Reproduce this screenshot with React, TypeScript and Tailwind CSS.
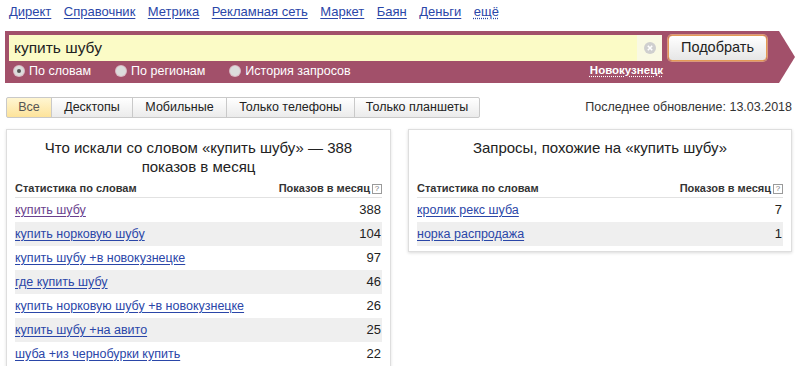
import React from "react";

const navLinks = ["Директ", "Справочник", "Метрика", "Рекламная сеть", "Маркет", "Баян", "Деньги"];

const leftRows: [string, string][] = [
  ["купить шубу", "388"],
  ["купить норковую шубу", "104"],
  ["купить шубу +в новокузнецке", "97"],
  ["где купить шубу", "46"],
  ["купить норковую шубу +в новокузнецке", "26"],
  ["купить шубу +на авито", "25"],
  ["шуба +из чернобурки купить", "22"],
];

const rightRows: [string, string][] = [
  ["кролик рекс шуба", "7"],
  ["норка распродажа", "1"],
];

function Help() {
  return (
    <span className="ml-[2px] inline-flex h-[10px] w-[10px] items-center justify-center border border-[#9a9a9a] text-[8px] leading-none font-normal text-[#777]">
      ?
    </span>
  );
}

function Table({ rows, visitedFirst }: { rows: [string, string][]; visitedFirst?: boolean }) {
  return (
    <div>
      <div className="flex h-[18px] items-center justify-between border-b border-[#e2e2e2] text-[11px] font-bold text-[#333]">
        <span>Статистика по словам</span>
        <span className="flex items-center">
          Показов в месяц
          <Help />
        </span>
      </div>
      {rows.map(([q, n], i) => (
        <div
          key={q}
          className={`flex h-[24px] items-center justify-between text-[12.5px] ${i % 2 === 1 ? "bg-[#efefef]" : "bg-white"}`}
        >
          <span className={`underline underline-offset-2 ${visitedFirst && i === 0 ? "text-[#6a3f8e]" : "text-[#2a46a8]"}`}>{q}</span>
          <span className="pr-[1px] text-[13px] text-[#222]">{n}</span>
        </div>
      ))}
    </div>
  );
}

function Radio({ checked, label }: { checked?: boolean; label: string }) {
  return (
    <span className="flex items-center gap-[5px]">
      <span className="flex h-[10px] w-[10px] items-center justify-center rounded-full bg-[#dcdcdc] shadow-[0_0_0_1px_rgba(255,255,255,0.6)]">
        {checked && <span className="h-[4px] w-[4px] rounded-full bg-[#555]" />}
      </span>
      <span>{label}</span>
    </span>
  );
}

const tabs: [string, string][] = [
  ["Все", "w-[46px]"],
  ["Десктопы", "w-[82px]"],
  ["Мобильные", "w-[95px]"],
  ["Только телефоны", "w-[129px]"],
  ["Только планшеты", "w-[126px]"],
];

export default function App() {
  return (
    <div className="h-[366px] w-[800px] overflow-hidden bg-white font-['Liberation_Sans',Arial,sans-serif] text-[#222]">
      {/* top nav */}
      <div className="flex h-[22px] items-center gap-[12.5px] pl-[9px] pt-[1px] text-[13px]">
        {navLinks.map((l) => (
          <span key={l} className="text-[#2a46a8] underline underline-offset-2">
            {l}
          </span>
        ))}
        <span className="text-[#2a46a8] underline decoration-dotted underline-offset-2">ещё</span>
      </div>

      {/* purple search bar */}
      <div className="ml-[5px] mt-[9px] h-[52px] w-[790px] bg-[#a2506a] [clip-path:polygon(0_0,calc(100%-16px)_0,100%_50%,calc(100%-16px)_100%,0_100%)]">
        <div className="flex items-start pt-[4px]">
          <div className="ml-[4px] flex h-[26px] w-[653px] items-center bg-[#fbfbc6]">
            <span className="flex-1 pl-[5px] text-[15.5px] text-[#222]">купить шубу</span>
            <span className="flex h-full w-[25px] items-center justify-center bg-[#f9f9e3]">
              <svg width="12" height="12" viewBox="0 0 12 12">
                <circle cx="6" cy="6" r="6" fill="#cfcfcf" />
                <path d="M3.8 3.8 L8.2 8.2 M8.2 3.8 L3.8 8.2" stroke="#fff" strokeWidth="1.6" />
              </svg>
            </span>
          </div>
          <div className="ml-[6px] flex h-[26px] w-[99px] items-center justify-center rounded-[4px] border border-[#e39a55] bg-gradient-to-b from-white to-[#e6e6e6] text-[14.5px] text-[#222] shadow-[0_0_0_1px_rgba(255,200,140,0.6)]">
            Подобрать
          </div>
        </div>
        <div className="flex h-[20px] items-center text-[12.5px] text-white">
          <div className="ml-[9px] flex gap-[25px]">
            <Radio checked label="По словам" />
            <Radio label="По регионам" />
            <Radio label="История запросов" />
          </div>
          <span className="ml-auto mr-[132px] text-[11.5px] font-bold underline decoration-dotted underline-offset-2">Новокузнецк</span>
        </div>
      </div>

      {/* tabs + update */}
      <div className="mt-[14px] flex items-center justify-between pl-[6px] pr-[8px]">
        <div className="flex">
          {tabs.map(([t, w], i) => (
            <div
              key={t}
              className={`flex h-[21px] items-center justify-center border border-[#c9c9c9] text-[12.5px] ${w} ${
                i === 0
                  ? "rounded-l-[2px] bg-gradient-to-b from-[#fff6d2] to-[#fde39a] text-[#555]"
                  : "-ml-px bg-gradient-to-b from-white to-[#ebebeb] text-[#222]"
              } ${i === tabs.length - 1 ? "rounded-r-[2px]" : ""}`}
            >
              {t}
            </div>
          ))}
        </div>
        <span className="text-[12.5px] text-[#333]">Последнее обновление: 13.03.2018</span>
      </div>

      {/* panels */}
      <div className="mt-[11px] flex gap-[17px] pl-[6px]">
        <div className="w-[385px] border border-[#dedede] px-[8px] pb-[7px] shadow-[0_1px_3px_rgba(0,0,0,0.12)]">
          <div className="flex h-[50px] items-start justify-center px-[10px] pt-[8px] text-center text-[15px] leading-[19px] text-[#222]">
            Что искали со словом «купить шубу» — 388 показов в месяц
          </div>
          <Table rows={leftRows} visitedFirst />
        </div>
        <div className="h-[123px] w-[384px] border border-[#dedede] px-[8px] pb-[7px] shadow-[0_1px_3px_rgba(0,0,0,0.15)]">
          <div className="flex h-[50px] items-start justify-center pt-[8px] text-center text-[15px] leading-[19px] text-[#222]">
            Запросы, похожие на «купить шубу»
          </div>
          <Table rows={rightRows} />
        </div>
      </div>
    </div>
  );
}
